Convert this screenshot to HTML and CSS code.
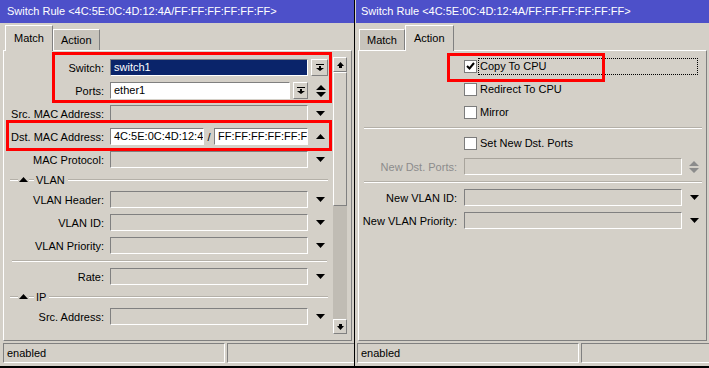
FILE: index.html
```html
<!DOCTYPE html>
<html lang="en">
<head>
  <meta charset="UTF-8"/>
  <title>Switch Rule</title>
  <link rel="stylesheet" href="styles.css">
</head>
<body>
  <div class="desktop">

    <!-- Match tab window -->
    <div class="window">
      <div class="titlebar">Switch Rule &lt;4C:5E:0C:4D:12:4A/FF:FF:FF:FF:FF:FF&gt;</div>
      <div class="tabs">
        <div class="tab active">Match</div>
        <div class="tab">Action</div>
      </div>
      <div class="panel">
        <div class="form">
          <div class="row">
            <div class="label">Switch:</div>
            <div class="field-area"><div class="field selected">switch1</div></div>
            <div class="arrow start">
              <div class="btn">
                <svg width="8" height="7" viewBox="0 0 8 7"><path d="M0 0h8v1H0zM3 2h2v2h3L4 7 0 4h3z"/></svg>
              </div>
            </div>
          </div>
          <div class="row">
            <div class="label">Ports:</div>
            <div class="field-area">
              <div class="field white">ether1</div>
              <div class="btn small">
                <svg width="8" height="7" viewBox="0 0 8 7"><path d="M0 0h8v1H0zM3 2h2v2h3L4 7 0 4h3z"/></svg>
              </div>
            </div>
            <div class="arrow">
              <svg width="10" height="12" viewBox="0 0 10 12"><path d="M0 5h10L5 0zM0 7h10L5 12z"/></svg>
            </div>
          </div>
          <div class="row">
            <div class="label">Src. MAC Address:</div>
            <div class="field-area"><div class="field"></div></div>
            <div class="arrow"><svg width="9" height="5" viewBox="0 0 9 5"><path d="M0 0h9L4.5 5z"/></svg></div>
          </div>
          <div class="row">
            <div class="label">Dst. MAC Address:</div>
            <div class="field-area">
              <div class="field white half">4C:5E:0C:4D:12:4A</div>
              <span class="slash">/</span>
              <div class="field white half">FF:FF:FF:FF:FF:FF</div>
            </div>
            <div class="arrow"><svg width="9" height="5" viewBox="0 0 9 5"><path d="M0 5h9L4.5 0z"/></svg></div>
          </div>
          <div class="row">
            <div class="label">MAC Protocol:</div>
            <div class="field-area"><div class="field"></div></div>
            <div class="arrow"><svg width="9" height="5" viewBox="0 0 9 5"><path d="M0 0h9L4.5 5z"/></svg></div>
          </div>
          <div class="section">
            <span class="rule lead"></span>
            <svg class="section-toggle" width="9" height="5" viewBox="0 0 9 5"><path d="M0 5h9L4.5 0z"/></svg>
            <span class="rule mid"></span>
            <span class="section-title">VLAN</span>
            <span class="rule fill"></span>
          </div>
          <div class="row">
            <div class="label">VLAN Header:</div>
            <div class="field-area"><div class="field"></div></div>
            <div class="arrow"><svg width="9" height="5" viewBox="0 0 9 5"><path d="M0 0h9L4.5 5z"/></svg></div>
          </div>
          <div class="row">
            <div class="label">VLAN ID:</div>
            <div class="field-area"><div class="field"></div></div>
            <div class="arrow"><svg width="9" height="5" viewBox="0 0 9 5"><path d="M0 0h9L4.5 5z"/></svg></div>
          </div>
          <div class="row">
            <div class="label">VLAN Priority:</div>
            <div class="field-area"><div class="field"></div></div>
            <div class="arrow"><svg width="9" height="5" viewBox="0 0 9 5"><path d="M0 0h9L4.5 5z"/></svg></div>
          </div>
          <div class="separator"><span class="rule fill"></span></div>
          <div class="row">
            <div class="label">Rate:</div>
            <div class="field-area"><div class="field"></div></div>
            <div class="arrow"><svg width="9" height="5" viewBox="0 0 9 5"><path d="M0 0h9L4.5 5z"/></svg></div>
          </div>
          <div class="section">
            <span class="rule lead"></span>
            <svg class="section-toggle" width="9" height="5" viewBox="0 0 9 5"><path d="M0 5h9L4.5 0z"/></svg>
            <span class="rule mid"></span>
            <span class="section-title">IP</span>
            <span class="rule fill"></span>
          </div>
          <div class="row">
            <div class="label">Src. Address:</div>
            <div class="field-area"><div class="field"></div></div>
            <div class="arrow"><svg width="9" height="5" viewBox="0 0 9 5"><path d="M0 0h9L4.5 5z"/></svg></div>
          </div>
        </div>
        <div class="scrollbar">
          <div class="sb-btn"><svg width="7" height="6" viewBox="0 0 7 6"><path d="M3.5 0L7 4H5v2H2V4H0z"/></svg></div>
          <div class="sb-thumb"></div>
          <div class="sb-track"></div>
          <div class="sb-btn"><svg width="7" height="6" viewBox="0 0 7 6"><path d="M3.5 6L7 2H5V0H2v2H0z"/></svg></div>
        </div>
      </div>
      <div class="statusbar">
        <div class="status-cell main">enabled</div>
        <div class="status-cell rest"></div>
      </div>
      <div class="highlight hl-switch"></div>
      <div class="highlight hl-dst"></div>
    </div>

    <!-- Action tab window -->
    <div class="window action">
      <div class="titlebar">Switch Rule &lt;4C:5E:0C:4D:12:4A/FF:FF:FF:FF:FF:FF&gt;</div>
      <div class="tabs">
        <div class="tab">Match</div>
        <div class="tab active">Action</div>
      </div>
      <div class="panel">
        <div class="form">
          <div class="check-row">
            <div class="checkbox">
              <svg width="9" height="9" viewBox="0 0 9 9"><path d="M1 4l2.5 2.5L8 1" fill="none" stroke="#000" stroke-width="2"/></svg>
            </div>
            <span class="caption focus">Copy To CPU</span>
          </div>
          <div class="check-row">
            <div class="checkbox"></div>
            <span class="caption">Redirect To CPU</span>
          </div>
          <div class="check-row">
            <div class="checkbox"></div>
            <span class="caption">Mirror</span>
          </div>
          <div class="separator"><span class="rule fill"></span></div>
          <div class="check-row">
            <div class="checkbox"></div>
            <span class="caption">Set New Dst. Ports</span>
          </div>
          <div class="row disabled">
            <div class="label">New Dst. Ports:</div>
            <div class="field-area"><div class="field"></div></div>
            <div class="arrow">
              <svg width="10" height="12" viewBox="0 0 10 12"><path d="M0 5h10L5 0zM0 7h10L5 12z"/></svg>
            </div>
          </div>
          <div class="separator"><span class="rule fill"></span></div>
          <div class="row">
            <div class="label">New VLAN ID:</div>
            <div class="field-area"><div class="field"></div></div>
            <div class="arrow"><svg width="9" height="5" viewBox="0 0 9 5"><path d="M0 0h9L4.5 5z"/></svg></div>
          </div>
          <div class="row">
            <div class="label">New VLAN Priority:</div>
            <div class="field-area"><div class="field"></div></div>
            <div class="arrow"><svg width="9" height="5" viewBox="0 0 9 5"><path d="M0 0h9L4.5 5z"/></svg></div>
          </div>
        </div>
      </div>
      <div class="statusbar">
        <div class="status-cell main">enabled</div>
        <div class="status-cell rest"></div>
      </div>
      <div class="highlight hl-copy"></div>
    </div>

  </div>
</body>
</html>
```

FILE: styles.css
```css
:root {
  --face: #d4d0c8;
  --shadow: #808080;
  --light: #fff;
  --title: #4d50c9;
  --tab-off: #c8c4bc;
  --track: #c0bcb4;
  --mark: #f00;
}

* {
  margin: 0;
  padding: 0;
  box-sizing: border-box;
}

body {
  background: #000;
  font-family: "Liberation Sans", Arial, sans-serif;
  font-size: 11px;
  color: #000;
}

.desktop {
  display: flex;
  gap: 1px;
  width: 709px;
  height: 368px;
}

.window {
  position: relative;
  width: 354px;
  height: 366px;
  background: var(--face);
  display: flex;
  flex-direction: column;
}

.titlebar {
  height: 23px;
  line-height: 23px;
  background: var(--title);
  color: #fff;
  padding-left: 7px;
  white-space: nowrap;
  overflow: hidden;
}

.window.action .titlebar {
  margin-left: 1px;
  padding-left: 5px;
}

/* Tabs */
.tabs {
  display: flex;
  align-items: flex-end;
  height: 27px;
  padding-left: 5px;
}

.window.action .tabs {
  padding-left: 4px;
}

.tab {
  height: 21px;
  line-height: 20px;
  padding: 0 7px;
  background: var(--tab-off);
  border-top: 1px solid var(--light);
  border-left: 1px solid var(--light);
  border-right: 1px solid var(--shadow);
}

.tab.active {
  position: relative;
  z-index: 1;
  height: 26px;
  line-height: 25px;
  margin-bottom: -1px;
  padding: 0 8px;
  background: var(--face);
}

/* Panel */
.panel {
  flex: 1;
  display: flex;
  margin: 0 2px 0 3px;
  padding-right: 4px;
  border: 1px solid;
  border-color: var(--light) var(--shadow) var(--shadow) var(--light);
  overflow: hidden;
}

.form {
  flex: 1;
  padding-top: 5px;
}

.window.action .form {
  padding-top: 4px;
}

.window.action .panel {
  padding-right: 0;
}

.row {
  display: flex;
  align-items: center;
  height: 23px;
}

.label {
  width: 106px;
  padding-right: 6px;
  text-align: right;
  white-space: nowrap;
}

.field-area {
  width: 198px;
  display: flex;
  align-items: center;
}

.arrow {
  width: 25px;
  display: flex;
  justify-content: center;
  align-items: center;
}

.arrow.start {
  justify-content: flex-start;
  padding-left: 3px;
}

.window.action .label {
  width: 105px;
  padding-right: 7px;
}

.window.action .field-area {
  width: 218px;
}

.window.action .arrow {
  width: 24px;
}

.field {
  flex: 1;
  min-width: 0;
  height: 17px;
  line-height: 15px;
  padding-left: 3px;
  border: 1px solid;
  border-color: var(--shadow) var(--light) var(--light) var(--shadow);
  white-space: nowrap;
  overflow: hidden;
}

.field.half {
  flex: none;
  width: 94px;
}

.field.white {
  background: #fff;
}

.field.selected {
  background: #0a246a;
  color: #fff;
}

.slash {
  width: 10px;
  flex: none;
  text-align: center;
}

.btn {
  width: 17px;
  height: 17px;
  display: flex;
  align-items: center;
  justify-content: center;
  background: var(--face);
  border: 1px solid;
  border-color: var(--light) var(--shadow) var(--shadow) var(--light);
}

.btn.small {
  width: 15px;
  margin-left: 3px;
}

.disabled .label {
  color: #8c8c8c;
}

.disabled .field {
  border-color: #a8a49c var(--light) var(--light) #a8a49c;
}

.disabled svg {
  fill: #8c8c8c;
}

/* Section headers and separators */
.section {
  display: flex;
  align-items: center;
  height: 17px;
  padding: 0 5px 0 6px;
}

.rule {
  height: 2px;
  border-top: 1px solid #b4b0a8;
  border-bottom: 1px solid var(--light);
}

.rule.lead {
  width: 8px;
}

.rule.mid {
  width: 5px;
}

.rule.fill {
  flex: 1;
}

.section-toggle {
  margin: 0 1px;
}

.section-title {
  margin: 0 3px 0 2px;
}

.separator {
  display: flex;
  align-items: center;
  height: 8px;
  padding: 0 6px 0 8px;
}

.window.action .separator {
  padding: 0 4px 0 5px;
}

/* Checkboxes */
.check-row {
  display: flex;
  align-items: center;
  height: 23px;
  padding-left: 105px;
}

.checkbox {
  width: 13px;
  height: 13px;
  display: flex;
  align-items: center;
  justify-content: center;
  background: #fff;
  border: 1px solid #7c7c7c;
}

.caption {
  height: 17px;
  line-height: 15px;
  margin-left: 1px;
  padding-left: 1px;
  border: 1px solid transparent;
}

.caption.focus {
  flex: 1;
  margin-right: 8px;
  border: 1px dotted #000;
}

/* Scrollbar */
.scrollbar {
  width: 14px;
  height: 277px;
  margin-top: 6px;
  display: flex;
  flex-direction: column;
}

.sb-btn {
  height: 15px;
  display: flex;
  align-items: center;
  justify-content: center;
  border: 1px solid;
  border-color: var(--light) var(--shadow) var(--shadow) var(--light);
}

.sb-thumb {
  height: 134px;
  border: 1px solid;
  border-color: var(--light) var(--shadow) var(--shadow) var(--light);
}

.sb-track {
  flex: 1;
  background: var(--track);
}

/* Status bar */
.statusbar {
  height: 25px;
  display: flex;
  gap: 2px;
  padding: 2px 0 3px 3px;
}

.window.action .statusbar {
  padding-left: 2px;
}

.status-cell {
  line-height: 18px;
  padding-left: 3px;
  border: 1px solid;
  border-color: var(--shadow) var(--light) var(--light) var(--shadow);
}

.status-cell.main {
  width: 222px;
}

.status-cell.rest {
  flex: 1;
  border-right: none;
}

/* Red annotation boxes */
.highlight {
  position: absolute;
  border: 3px solid var(--mark);
}

.hl-switch {
  left: 52px;
  top: 52px;
  width: 280px;
  height: 51px;
}

.hl-dst {
  left: 6px;
  top: 120px;
  width: 326px;
  height: 31px;
}

.hl-copy {
  left: 92px;
  top: 53px;
  width: 158px;
  height: 29px;
}
```
